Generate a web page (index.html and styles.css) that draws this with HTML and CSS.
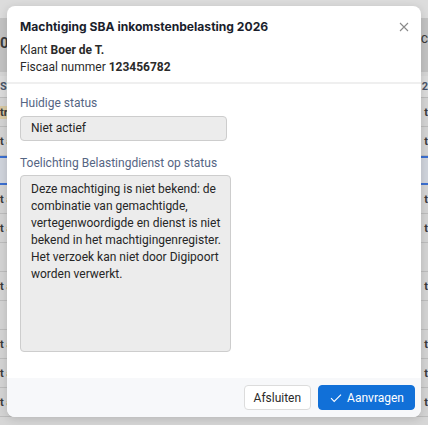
FILE: index.html
```html
<!DOCTYPE html>
<html lang="nl">
<head>
  <meta charset="UTF-8">
  <meta name="viewport" content="width=device-width, initial-scale=1.0">
  <title>Machtiging SBA inkomstenbelasting 2026</title>
  <link rel="stylesheet" href="styles.css">
</head>
<body>
  <!-- Page behind the dialog (dimmed) -->
  <div class="page">
    <div class="page-top"></div>
    <div class="page-band">
      <span class="band-left">0:</span>
      <span class="band-right">ic</span>
    </div>
    <div class="table">
      <div class="row head"><span>SL</span><span>2</span></div>
      <div class="row"><span class="tag">tr</span><span>t</span></div>
      <div class="row"><span>t a</span><span>t</span></div>
      <div class="row selected"><span></span><span></span></div>
      <div class="row"><span>t a</span><span>t</span></div>
      <div class="row"><span>t a</span><span>t</span></div>
      <div class="row"><span></span><span></span></div>
      <div class="row"><span>t a</span><span>t</span></div>
      <div class="row"><span></span><span></span></div>
      <div class="row"><span>t a</span><span>t</span></div>
      <div class="row"><span>t a</span><span>t</span></div>
      <div class="row"><span>t a</span><span>t</span></div>
    </div>
  </div>

  <div class="modal">
    <div class="modal-header">
      <h1>Machtiging SBA inkomstenbelasting 2026</h1>
      <button class="close" aria-label="Sluiten">
        <svg width="10" height="10" viewBox="0 0 10 10"><path d="M1 1L9 9M9 1L1 9" stroke="#8a8a8a" stroke-width="1.1" fill="none"/></svg>
      </button>
      <p>Klant <b>Boer de T.</b></p>
      <p>Fiscaal nummer <b>123456782</b></p>
    </div>

    <div class="modal-body">
      <label class="field-label">Huidige status</label>
      <div class="field status">Niet actief</div>

      <label class="field-label second">Toelichting Belastingdienst op status</label>
      <div class="field remark">Deze machtiging is niet bekend: de combinatie van gemachtigde, vertegenwoordigde en dienst is niet bekend in het machtigingenregister. Het verzoek kan niet door Digipoort worden verwerkt.</div>
    </div>

    <div class="modal-footer">
      <button class="btn">Afsluiten</button>
      <button class="btn primary">
        <svg width="12" height="10" viewBox="0 0 12 10"><path d="M1 5.2L4.2 8.4L11 1.6" stroke="#ffffff" stroke-width="1.1" fill="none"/></svg>
        Aanvragen
      </button>
    </div>
  </div>
</body>
</html>
```

FILE: styles.css
```css
body {
  margin: 0;
  width: 428px;
  height: 425px;
  overflow: hidden;
  font-family: "Roboto", "Open Sans", sans-serif;
  background-color: #d6d6d6;
  position: relative;
}

/* dimmed application behind the dialog */
.page {
  height: 425px;
  color: #3a3a3a;
  font-size: 12px;
  font-weight: 700;
}

.page-top {
  height: 18px;
  background-color: #dcdcdc;
}

.page-band {
  height: 54px;
  background-color: #c3c3c3;
  display: flex;
  justify-content: space-between;
  align-items: center;
  font-size: 15px;
}

.band-left {
  margin-top: -4px;
}

.band-right {
  font-weight: 400;
  font-size: 14px;
  margin-top: -14px;
}

.table {
  margin-top: 4px;
  background-color: #d4d4d4;
}

.table .row {
  height: 28px;
  border-bottom: 1px solid #bdbdbd;
  display: flex;
  justify-content: space-between;
  align-items: center;
  font-size: 11px;
}

.table .row.head {
  height: 21px;
  background-color: #dcdcdc;
  color: #4a5568;
}

.table .row .tag {
  background-color: #d8c9a3;
  padding: 0 3px 0 0;
}

.table .row.selected {
  border-top: 2px solid #3b6fd0;
  border-bottom: 2px solid #3b6fd0;
  background-color: #d0d4dc;
  height: 25px;
}

/* dialog */
.modal {
  position: absolute;
  left: 7px;
  top: 6px;
  width: 414px;
  height: 411px;
  background-color: #ffffff;
  border-radius: 8px;
  box-shadow: 0 2px 10px rgba(0, 0, 0, 0.15);
  display: flex;
  flex-direction: column;
  overflow: hidden;
}

.modal-header {
  position: relative;
  padding: 12px 13px 6px;
  border-bottom: 2px solid #efefef;
}

.modal-header h1 {
  margin: 0 0 6px;
  font-family: "Inter", sans-serif;
  font-size: 12.1px;
  font-weight: 650;
  line-height: 18px;
  color: #1a1e2c;
}

.modal-header p {
  margin: 0;
  font-size: 12px;
  line-height: 17px;
  color: #2a2a2a;
}

.modal-header b {
  font-weight: 700;
}

.close {
  position: absolute;
  top: 13px;
  right: 9px;
  width: 16px;
  height: 16px;
  padding: 0;
  border: none;
  background: none;
  display: flex;
  align-items: center;
  justify-content: center;
}

.modal-body {
  flex: 1;
  padding: 11px 13px 0;
}

.field-label {
  display: block;
  font-size: 12px;
  line-height: 17px;
  color: #556583;
  margin-bottom: 4px;
}

.field-label.second {
  margin-top: 14px;
  margin-bottom: 3px;
}

.field {
  background-color: #ececec;
  border: 1px solid #cdcdcd;
  border-radius: 4px;
  box-sizing: border-box;
  font-size: 12px;
  color: #262626;
}

.field.status {
  width: 207px;
  height: 25px;
  line-height: 23px;
  padding: 0 10px;
}

.field.remark {
  width: 211px;
  height: 177px;
  line-height: 17px;
  padding: 5px 4px 4px 10px;
}

.modal-footer {
  height: 39px;
  background-color: #f7f8fa;
  display: flex;
  justify-content: flex-end;
  align-items: center;
  gap: 7px;
  padding: 0 6px;
}

.btn {
  height: 25px;
  padding: 0 9px;
  font-family: "Roboto", sans-serif;
  font-size: 12px;
  border-radius: 4px;
  border: 1px solid #dcdcdc;
  background-color: #ffffff;
  color: #2a2a2a;
  display: flex;
  align-items: center;
  gap: 5px;
}

.btn.primary {
  background-color: #1170d8;
  border-color: #1170d8;
  color: #ffffff;
  padding: 0 10px 0 11px;
}
```
